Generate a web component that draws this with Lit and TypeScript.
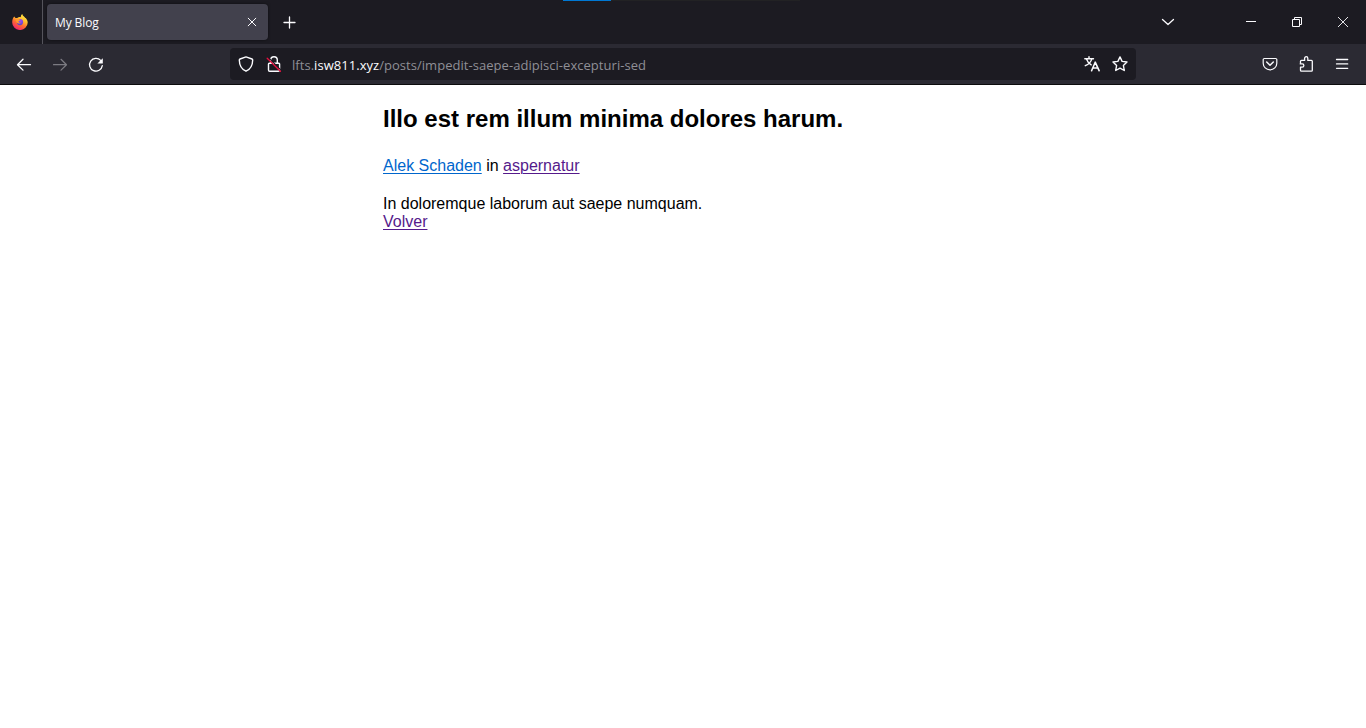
import { LitElement, html, css, svg } from "lit";
import { customElement } from "lit/decorators.js";

const icon = (body: unknown, size = 16) => html`<svg width=${size} height=${size} viewBox="0 0 ${size} ${size}" fill="none" stroke="currentColor" stroke-width="1.3" stroke-linecap="round" stroke-linejoin="round">${body}</svg>`;

const firefox = html`<svg width="16" height="16" viewBox="0 0 16 16">
  <defs>
    <linearGradient id="flame" x1=".8" y1="0" x2=".25" y2="1">
      <stop offset="0" stop-color="#fff04a" /><stop offset=".35" stop-color="#ffbd2f" />
      <stop offset=".62" stop-color="#ff6b30" /><stop offset="1" stop-color="#f0197a" />
    </linearGradient>
    <radialGradient id="globe" cx=".6" cy=".3" r=".8">
      <stop offset="0" stop-color="#a04bf5" /><stop offset="1" stop-color="#4b3fc4" />
    </radialGradient>
  </defs>
  <path d="M2.2 2.4 3.5 4 5.2 3.9C6.4 2.8 8 2.8 8.8 3.2 8.8 1.6 9.4.6 10.3 0c.2 1.4 1.2 2 2.2 3 .4.4.6.7.8 1 .2 0 .5.2.8.4 1 1.3 1.6 2.7 1.6 4.200A7.700 7.400 0 0 1 .2 8.600C.2 6 .7 4 2.200 2.400z" fill="url(#flame)" />
  <circle cx="8" cy="8.100" r="3.100" fill="url(#globe)" />
  <path d="M3.500 5.200 6.700 5c.6.6 1.200.7 1.700.8-.2.900-1.700 1-1.900 1.900.3.900 1.500 1.200 2.500.7-.5 1.200-2.700 1.500-4.400.2z" fill="#ff9a2c" />
</svg>`;
const closeTab = icon(svg`<path stroke-width="1" d="m4.200 4.200 7.600 7.600m0-7.600-7.600 7.600"/>`);
const plus = icon(svg`<path stroke-width="1.300" d="M7.500 2v11M2 7.500h11"/>`);
const chevron = icon(svg`<path d="m2.500 5.500 5.500 5 5.500-5"/>`);
const minimize = icon(svg`<path stroke-width="1" stroke-linecap="butt" d="M3 7.500h10"/>`);
const restore = icon(svg`<path stroke-width="1" stroke-linejoin="miter" stroke-linecap="butt" d="M3.500 5.500h7v7h-7zM5.500 5.500v-2h7v7h-2"/>`);
const closeWin = icon(svg`<path stroke-width=".9" stroke-linecap="butt" d="m3 3 10 10m0-10L3 13"/>`);
const back = icon(svg`<path stroke-width="1.300" d="M14.500 7.700H1.500M7 2.300 1.500 7.700 7 13.100"/>`);
const forward = icon(svg`<path stroke-width="1.200" d="M1.500 7.700h13M9 2.300 14.500 7.700 9 13.100"/>`);
const reload = icon(svg`<path stroke-width="1.300" d="M12.700 3.400A6.400 6.400 0 1 0 14.300 8.700"/><path fill="currentColor" stroke="none" d="M14.800 1.200v4.900a.5.500 0 0 1-.5.500H9.400z"/>`);
const shield = icon(svg`<path stroke-width="1.400" d="M8 .9 14 3c.5.2.7.500.7 1-.1 5.200-2.300 9.300-6.700 11.200C3.600 13.300 1.400 9.200 1.300 4c0-.5.200-.8.700-1z"/>`);
const lock = icon(svg`<path stroke-width="1.400" d="M4.700 7.200V4.100a3.300 3.300 0 0 1 6.600 0v3.100M3.300 7.200h9.500a.8.800 0 0 1 .8.800v6a1.200 1.200 0 0 1-1.200 1.200H3.700A1.200 1.200 0 0 1 2.500 14V8a.8.800 0 0 1 .8-.8z"/><path stroke="#1c1b22" stroke-width="1.200" d="M2.500 1.700 15 14.200"/><path stroke="#e8103f" stroke-width="1.300" d="M1.200 2.200 14.400 15.300"/>`);
const translate = icon(svg`<path stroke-width="1.400" d="M.8 2.700h8.700M5 .8v1.900M7.800 2.900C7 6 4.600 8.300 1.300 9.700M2.600 3.200C3.400 5.700 5 7.500 7.200 8.800"/><path stroke-width="1.600" d="m7.600 14.700 3.600-8.500 3.900 8.500M8.900 12h4.900"/>`);
const star = icon(svg`<path stroke-width="1.400" d="m8 .9 2.100 4.500 4.900.6-3.600 3.500.9 5-4.300-2.400-4.300 2.400.9-5L1 6l4.900-.6z"/>`);
const pocket = icon(svg`<path stroke-width="1.200" d="M2.300 2.500h11.400a1.100 1.100 0 0 1 1.100 1.100v3.700a6.800 6.500 0 0 1-13.600 0V3.600a1.100 1.100 0 0 1 1.100-1.100z"/><path stroke-width="1.500" d="m4.700 6 3.300 3.200L11.300 6"/>`);
const puzzle = icon(svg`<path stroke-width="1.300" d="M2.500 6.800V5.300c0-.5.400-.9.900-.9h3.200V2.300a1.600 1.600 0 0 1 3.200 0v2.100h3.600c.5 0 .9.400.9.900v9c0 .5-.4.900-.9.900h-10c-.5 0-.9-.4-.9-.9v-3.200h1.700a1.600 1.600 0 0 0 0-3.300H2.100"/>`);
const menu = icon(svg`<path stroke-width="1.300" d="M2.500 3.500h11.200M2.500 7.900h11.200M2.500 12.300h11.200"/>`);

@customElement("app-root")
export class AppRoot extends LitElement {
  static styles = css`
    :host { display: flex; flex-direction: column; height: 728px; background: #fff; overflow: hidden; }
    svg { display: block; flex: none; }
    .tabs { height: 44px; display: flex; align-items: center; background: #1c1b22; color: #fbfbfe; box-sizing: border-box; flex: none; position: relative; }
    .progress { position: absolute; left: 563px; top: 0; width: 237px; height: 1px; background: linear-gradient(90deg, #0078d4 48px, #222224 48px); }
    .brand { width: 43px; height: 44px; display: flex; align-items: center; padding-left: 12px; box-sizing: border-box; border-right: 1px solid #55545c; flex: none; }
    .tab { width: 221px; height: 36px; margin-left: 4px; border-radius: 4px; background: #42414d; display: flex; align-items: center; justify-content: space-between; box-sizing: border-box; padding: 0 8px; box-shadow: 0 0 3px #0008; font: 12px/16px "Open Sans", "Noto Sans", sans-serif; }
    .title { letter-spacing: -0.1px; padding-top: 2px; }
    .plus { margin-left: 14px; padding-top: 1px; }
    .controls { margin-left: auto; display: flex; align-items: center; padding-right: 15px; }
    .controls svg { margin-left: 30px; }
    .controls .first svg { margin: 0 37px 0 0; }
    .bar { height: 41px; box-sizing: border-box; border-bottom: 1px solid #0c0c0d; background: #2b2a33; color: #fbfbfe; display: flex; align-items: center; flex: none; }
    .nav { width: 230px; box-sizing: border-box; padding: 1px 0 0 16px; display: flex; gap: 20px; flex: none; }
    .dim { color: #7c7b82; }
    .url { width: 906px; height: 32px; border-radius: 4px; background: #1c1b22; display: flex; align-items: center; box-sizing: border-box; padding: 0 8px; flex: none; }
    .shield { margin-right: 12px; }
    .address { margin-left: 10px; flex: 1; white-space: nowrap; font: 13px/20px "Open Sans", "Noto Sans", sans-serif; letter-spacing: 0.04px; color: #8f8f96; padding-top: 2px; }
    .host { color: #fbfbfe; }
    .actions { display: flex; gap: 12px; }
    .tools { margin-left: auto; display: flex; gap: 20px; padding-right: 16px; }
    main { width: 600px; margin: 0 auto; font: 16px/18px "Liberation Sans", Arial, sans-serif; color: #000; }
    h1 { font-size: 24px; line-height: 27px; margin: 20px 0; }
    p { margin: 0 0 20px; padding-top: 5px; }
    a { color: #0066cc; text-decoration: underline; text-decoration-thickness: 1px; text-underline-offset: 2px; }
    .visited { color: #551a8b; }
  `;

  render() {
    return html`
      <div class="tabs">
        <div class="progress"></div>
        <div class="brand">${firefox}</div>
        <div class="tab"><span class="title">My Blog</span>${closeTab}</div>
        <div class="plus">${plus}</div>
        <div class="controls"><span class="first">${chevron}</span>${minimize}${restore}${closeWin}</div>
      </div>
      <div class="bar">
        <div class="nav">${back}<span class="dim">${forward}</span>${reload}</div>
        <div class="url">
          <span class="shield">${shield}</span>${lock}
          <span class="address">lfts.<span class="host">isw811.xyz</span>/posts/impedit-saepe-adipisci-excepturi-sed</span>
          <span class="actions">${translate}${star}</span>
        </div>
        <div class="tools">${pocket}${puzzle}${menu}</div>
      </div>
      <main>
        <h1>Illo est rem illum minima dolores harum.</h1>
        <p><a>Alek Schaden</a> in <a class="visited">aspernatur</a></p>
        <div>In doloremque laborum aut saepe numquam.</div>
        <a class="visited">Volver</a>
      </main>
    `;
  }
}
